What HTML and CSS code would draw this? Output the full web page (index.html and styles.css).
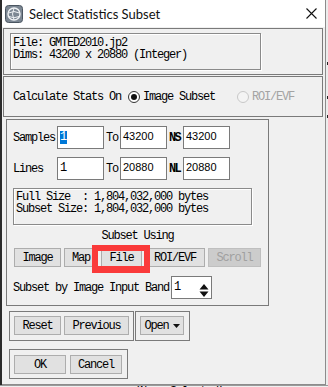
FILE: index.html
```html
<!DOCTYPE html>
<html lang="en">

<head>
   <meta charset="UTF-8" />
   <meta name="viewport" content="width=device-width, initial-scale=1.0" />
   <title>Select Statistics Subset</title>
   <link rel="stylesheet" href="styles.css">
</head>

<body>
   <div class="screen">
      <div class="desk-left"></div>

      <div class="dialog">
         <div class="titlebar">
            <svg class="app-icon" width="18" height="18" viewBox="0 0 18 18">
               <rect x="0.5" y="0.5" width="17" height="17" rx="3" fill="#7c8793" stroke="#4b5661" />
               <circle cx="9" cy="9" r="6" fill="none" stroke="#eef1f4" stroke-width="1.4" />
               <path d="M3.5 8 Q9 5 14.5 8 M4 11.5 Q9 14 14 11.5 M9 3 Q6 9 9 15" fill="none" stroke="#eef1f4" stroke-width="1" />
            </svg>
            <span class="title">Select Statistics Subset</span>
            <svg class="close" width="11" height="11" viewBox="0 0 11 11">
               <path d="M0.5 0.5 L10.5 10.5 M10.5 0.5 L0.5 10.5" stroke="#111" stroke-width="1.1" />
            </svg>
         </div>

         <div class="content">
            <div class="group file-group">
               <div class="sunken file-info">File: GMTED2010.jp2<br>Dims: 43200 x 20880 (Integer)</div>
            </div>

            <div class="group calc-group">
               <span>Calculate Stats On</span>
               <span class="radio checked"></span>
               <span class="radio-label">Image Subset</span>
               <span class="radio disabled"></span>
               <span class="radio-label muted">ROI/EVF</span>
            </div>

            <div class="group subset-group">
               <div class="range-row">
                  <span class="range-label">Samples</span>
                  <div class="field mono-val"><span class="selected">1</span></div>
                  <span class="to">To</span>
                  <div class="field">43200</div>
                  <span class="to bold">NS</span>
                  <div class="field">43200</div>
               </div>
               <div class="range-row lines-row">
                  <span class="range-label">Lines</span>
                  <div class="field mono-val">1</div>
                  <span class="to">To</span>
                  <div class="field">20880</div>
                  <span class="to bold">NL</span>
                  <div class="field">20880</div>
               </div>
               <div class="sunken size-info">Full Size&nbsp;&nbsp;: 1,804,032,000 bytes<br>Subset Size: 1,804,032,000 bytes</div>
               <div class="subset-using">Subset Using</div>
               <div class="using-row">
                  <button class="btn w-image">Image</button>
                  <button class="btn w-map">Map</button>
                  <button class="btn w-file">File</button>
                  <button class="btn w-roi">ROI/EVF</button>
                  <button class="btn w-scroll" disabled>Scroll</button>
               </div>
               <div class="band-row">
                  <span>Subset by Image Input Band</span>
                  <div class="field spinner mono-val">1
                     <svg class="spin-arrows" width="10" height="15" viewBox="0 0 10 15">
                        <path d="M5 1 L9.5 6.5 L0.5 6.5 Z M0.5 8.5 L9.5 8.5 L5 14 Z" fill="#111" />
                     </svg>
                  </div>
               </div>
            </div>

            <div class="frame-row">
               <div class="frame frame-reset">
                  <button class="btn w-reset">Reset</button>
                  <button class="btn w-prev">Previous</button>
               </div>
               <div class="frame frame-open">
                  <button class="btn w-open">Open<svg width="7" height="4" viewBox="0 0 7 4"><path d="M0 0 H7 L3.5 4 Z" fill="#111" /></svg></button>
               </div>
            </div>

            <div class="frame frame-ok">
               <button class="btn w-ok">OK</button>
               <button class="btn w-cancel">Cancel</button>
            </div>
         </div>
      </div>

      <div class="desk-right">
         <span class="tick t1"></span>
         <span class="tick t2"></span>
         <span class="tick t3"></span>
      </div>

      <div class="highlight"></div>
   </div>
   <div class="below">
      <span class="below-text">(None Selected)</span>
   </div>
</body>

</html>
```

FILE: styles.css
```css
:root {
   --face: #f0f0f0;
   --line: #7a7a7a;
   --btn: #e1e1e1;
   --btn-line: #adadad;
}

*,
*::before,
*::after {
   margin: 0;
   padding: 0;
   box-sizing: border-box;
}

body {
   width: 328px;
   height: 387px;
   overflow: hidden;
   background: var(--face);
   font-family: "Liberation Mono", monospace;
   font-size: 12px;
   line-height: 12px;
   letter-spacing: -1.2px;
   color: #000;
}

.screen {
   position: relative;
   display: flex;
   height: 385px;
}

.desk-left {
   width: 2px;
   background: #2b2b2b;
}

.dialog {
   width: 324px;
   background: var(--face);
   border-right: 1px solid #8c8c8c;
   border-bottom: 1px solid #8c8c8c;
}

.titlebar {
   height: 27px;
   background: #fff;
   display: flex;
   align-items: center;
   padding-left: 3px;
}

.title {
   margin-left: 6px;
   font-family: Lato, sans-serif;
   font-size: 13px;
   letter-spacing: 0;
   color: #111;
}

.close {
   margin-left: auto;
   margin-right: 8px;
}

.content {
   padding-left: 1px;
}

.group {
   border: 1px solid var(--line);
}

.file-group {
   margin-top: 1px;
   width: 320px;
   height: 47px;
   padding: 4px 0 0 6px;
}

.sunken {
   border: 1px solid #8a8a8a;
   box-shadow: inset 1px 1px 0 #fff, 1px 1px 0 #fff;
   padding: 3px 0 0 2px;
}

.file-info {
   width: 251px;
   height: 37px;
}

.calc-group {
   margin-top: 1px;
   width: 320px;
   height: 41px;
   display: flex;
   align-items: center;
   padding-left: 9px;
}

.radio {
   width: 12px;
   height: 12px;
   border-radius: 50%;
   border: 1px solid #333;
   background: #fff;
   display: grid;
   place-items: center;
   margin-left: 7px;
}

.radio.checked::after {
   content: '';
   width: 6px;
   height: 6px;
   border-radius: 50%;
   background: #111;
}

.radio.disabled {
   margin-left: 22px;
   border-color: #c8c8c8;
   background: #f4f4f4;
}

.radio-label {
   margin-left: 3px;
}

.muted {
   color: #a3a3a3;
}

.subset-group {
   margin: 2px 0 0 3px;
   width: 263px;
   height: 187px;
   padding: 6px 0 0 6px;
}

.range-row {
   display: flex;
   align-items: center;
   height: 23px;
}

.lines-row {
   margin-top: 8px;
}

.range-label {
   width: 44px;
}

.field {
   width: 47px;
   height: 23px;
   background: #fff;
   border: 1px solid var(--line);
   font-family: "Liberation Sans", sans-serif;
   font-size: 11px;
   letter-spacing: 0;
   padding: 3px 0 0 2px;
}

.mono-val {
   font-family: "Liberation Mono", monospace;
   font-size: 12px;
   letter-spacing: -1.2px;
   padding: 4px 0 0 2px;
}

.selected {
   display: inline-block;
   background: #0078d7;
   color: #fff;
   height: 13px;
   padding: 0 1px 0 0;
}

.to {
   margin: 0 2px;
   width: 12px;
}

.bold {
   font-weight: bold;
   letter-spacing: -1.6px;
}

.size-info {
   margin-top: 8px;
   width: 239px;
   height: 37px;
   padding-top: 2px;
}

.subset-using {
   margin-top: 5px;
   text-align: center;
   padding-right: 6px;
}

.using-row {
   margin-top: 6px;
   padding-left: 1px;
   display: flex;
   gap: 3px;
}

.btn {
   height: 19px;
   background: var(--btn);
   border: 1px solid var(--btn-line);
   font-family: inherit;
   font-size: 12px;
   letter-spacing: -1.2px;
   color: #000;
   display: flex;
   align-items: center;
   justify-content: center;
   gap: 4px;
}

.btn:disabled {
   background: #cccccc;
   border-color: #bfbfbf;
   color: #a0a0a0;
}

.w-image { width: 47px; }
.w-map { width: 34px; }
.w-file { width: 41px; }
.w-roi { width: 60px; }
.w-scroll { width: 53px; }
.w-reset { width: 47px; }
.w-prev { width: 65px; }
.w-open { width: 44px; }
.w-ok,
.w-cancel { width: 52px; }

.band-row {
   margin-top: 9px;
   display: flex;
   align-items: center;
   gap: 2px;
}

.spinner {
   width: 41px;
   display: flex;
   align-items: flex-start;
}

.spin-arrows {
   margin: 2px 0 0 auto;
   margin-right: 2px;
}

.frame-row {
   margin: 5px 0 0 6px;
   display: flex;
   gap: 1px;
}

.frame {
   border: 1px solid var(--line);
   display: flex;
   padding: 4px;
   gap: 3px;
}

.frame-reset {
   width: 125px;
   height: 30px;
}

.frame-open {
   width: 55px;
   height: 30px;
}

.frame-ok {
   margin: 8px 0 0 6px;
   width: 119px;
   height: 30px;
   padding-top: 5px;
   gap: 4px;
}

.desk-right {
   position: relative;
   flex: 1;
   background: #ececec;
}

.tick {
   position: absolute;
   left: 1px;
   width: 2px;
   height: 3px;
   background: #222;
}

.t1 { top: 62px; }
.t2 { top: 96px; }
.t3 { top: 115px; }

.highlight {
   position: absolute;
   left: 92px;
   top: 245px;
   width: 58px;
   height: 28px;
   border: 6px solid #fa3a3a;
   border-bottom-width: 7px;
}

.below {
   height: 2px;
   border-top: 1px solid #9a9a9a;
   overflow: hidden;
   background: #f0f0f0;
}

.below-text {
   display: block;
   margin-top: 0;
   padding-left: 134px;
   line-height: 12px;
}
```
